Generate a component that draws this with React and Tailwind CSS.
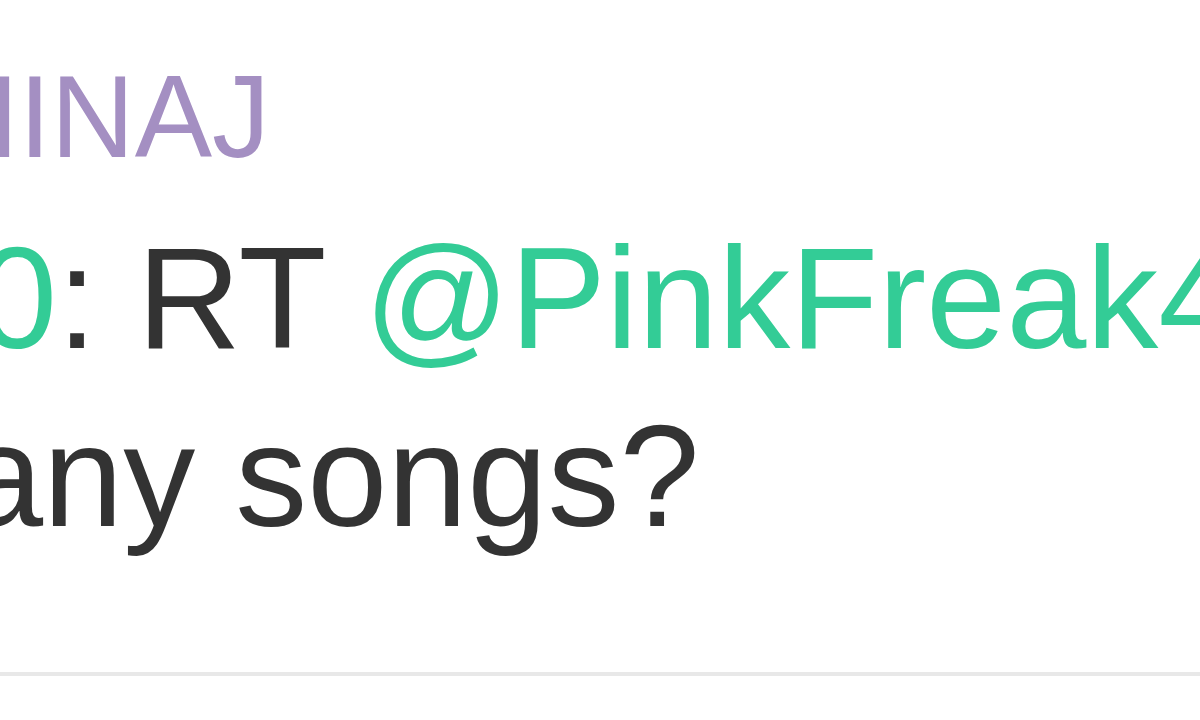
import React from 'react';

const App = () => {
    return (
        <div className="w-[1200px] h-[720px] overflow-hidden bg-white" style={{ fontFamily: '"Liberation Sans", Arial, sans-serif' }}>
            {/* tweet, zoomed way in */}
            <div className="pt-[47px] pb-[106px] border-b-[4px] border-[#e8e8e8]">
                <div className="ml-[-78px] whitespace-nowrap text-[116px] leading-[140px] text-[#a48fc2]">
                    MINAJ
                </div>
                <div className="mt-[23px] ml-[-23px] whitespace-nowrap text-[144px] leading-[178px] text-[#333333]">
                    <span className="text-[#33cc96]">0</span>: RT <span className="text-[#33cc96]">@PinkFreak4</span>
                </div>
                <div className="ml-[-37px] whitespace-nowrap text-[144px] leading-[178px] text-[#333333]">
                    any songs?
                </div>
            </div>
        </div>
    );
};

export default App;
